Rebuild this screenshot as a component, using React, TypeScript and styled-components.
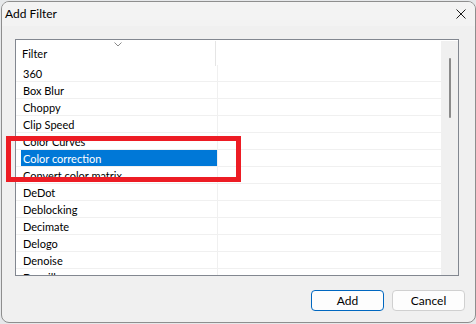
import React from 'react';
import styled, { createGlobalStyle } from 'styled-components';

const GlobalStyle = createGlobalStyle`
  html, body {
    margin: 0;
    padding: 0;
    background: #e6e8ea;
  }
  body {
    font-family: "Segoe UI", Lato, "Liberation Sans", sans-serif;
    font-size: 12px;
    color: #000;
  }
`

const Window = styled.div`
  position: relative;
  box-sizing: border-box;
  margin: 1px 0 0 1px;
  width: 475px;
  height: 322px;
  border: 1px solid #8e8e8e;
  border-radius: 8px;
  background: #f0f0f0;
  overflow: hidden;
  display: flex;
  flex-direction: column;
`

const TitleBar = styled.div`
  height: 24px;
  flex: 0 0 24px;
  display: flex;
  align-items: center;
  justify-content: space-between;
  padding: 0 9px 0 3px;
  background: #f3f3f3;
`

const Title = styled.span`
  font-size: 12px;
  line-height: 24px;
`

const CloseIcon = styled.svg`
  width: 10px;
  height: 10px;
  display: block;
`

const Body = styled.div`
  flex: 1;
  display: flex;
  flex-direction: column;
  padding: 13px 15px 0 13px;
`

const ListBox = styled.div`
  box-sizing: border-box;
  width: 444px;
  height: 237px;
  border: 1px solid #828790;
  background: #fff;
  display: flex;
  font-size: 11px;
`

const Table = styled.div`
  width: 425px;
  height: 100%;
  overflow: hidden;
`

const Header = styled.div`
  position: relative;
  height: 25px;
  display: grid;
  grid-template-columns: 200px 1fr;
`

const HeaderCell = styled.div<{ $divider?: boolean }>`
  padding-left: 6px;
  line-height: 25px;
  border-right: ${p => (p.$divider ? '1px solid #e5e5e5' : 'none')};
  margin: 1px 0 0;
`

const SortChevron = styled.svg`
  position: absolute;
  left: 98px;
  top: 2px;
  width: 8px;
  height: 5px;
`

const Row = styled.div`
  display: grid;
  grid-template-columns: 196px 1fr;
  padding-left: 5px;
  height: 16px;
  border-bottom: 1px solid #f0f0f0;
`

const Cell = styled.div<{ $selected?: boolean }>`
  padding-left: 2px;
  height: 16px;
  line-height: 18px;
  white-space: nowrap;
  overflow: hidden;
  background: ${p => (p.$selected ? '#0078d7' : 'transparent')};
  color: ${p => (p.$selected ? '#fff' : '#000')};
`

const EmptyCell = styled.div`
  border-left: 1px solid #f0f0f0;
`

const Scrollbar = styled.div`
  width: 17px;
  margin-top: 1px;
  background: #f0f0f0;
  display: flex;
  justify-content: center;
  padding-top: 17px;
  box-sizing: border-box;
`

const Thumb = styled.div`
  width: 2px;
  height: 60px;
  border-radius: 1px;
  background: #8a8a8a;
`

const ButtonRow = styled.div`
  display: flex;
  justify-content: flex-end;
  gap: 8px;
  margin-top: 14px;
  padding-right: 10px;
  margin-right: -15px;
`

const Button = styled.button<{ $primary?: boolean }>`
  box-sizing: border-box;
  width: 73px;
  height: 21px;
  padding: 0;
  border-radius: 4px;
  border: 1px solid ${p => (p.$primary ? '#0067c0' : '#d0d0d0')};
  background: #fdfdfd;
  font-family: inherit;
  font-size: 12px;
  color: #000;
`

const Annotation = styled.div`
  position: absolute;
  left: 4px;
  top: 134px;
  width: 235px;
  height: 46px;
  box-sizing: border-box;
  border: 5px solid #ed1c24;
  pointer-events: none;
`

const filters = [
  '360',
  'Box Blur',
  'Choppy',
  'Clip Speed',
  'Color Curves',
  'Color correction',
  'Convert color matrix',
  'DeDot',
  'Deblocking',
  'Decimate',
  'Delogo',
  'Denoise',
  'Despill',
];

const App: React.FC = () => {
  const selected = 'Color correction';
  return (
    <>
      <GlobalStyle />
      <Window>
        <TitleBar>
          <Title>Add Filter</Title>
          <CloseIcon viewBox="0 0 10 10">
            <path d="M0.5 0.5 L9.5 9.5 M9.5 0.5 L0.5 9.5" stroke="#1a1a1a" strokeWidth="1" />
          </CloseIcon>
        </TitleBar>
        <Body>
          <ListBox>
            <Table>
              <Header>
                <HeaderCell $divider>Filter</HeaderCell>
                <HeaderCell />
                <SortChevron viewBox="0 0 8 5">
                  <polyline points="0.5,0.5 4,4 7.5,0.5" fill="none" stroke="#8a8a8a" strokeWidth="1" />
                </SortChevron>
              </Header>
              {filters.map(name => (
                <Row key={name}>
                  <Cell $selected={name === selected}>{name}</Cell>
                  <EmptyCell />
                </Row>
              ))}
            </Table>
            <Scrollbar>
              <Thumb />
            </Scrollbar>
          </ListBox>
          <ButtonRow>
            <Button $primary>Add</Button>
            <Button>Cancel</Button>
          </ButtonRow>
        </Body>
        <Annotation />
      </Window>
    </>
  );
}

export default App;
